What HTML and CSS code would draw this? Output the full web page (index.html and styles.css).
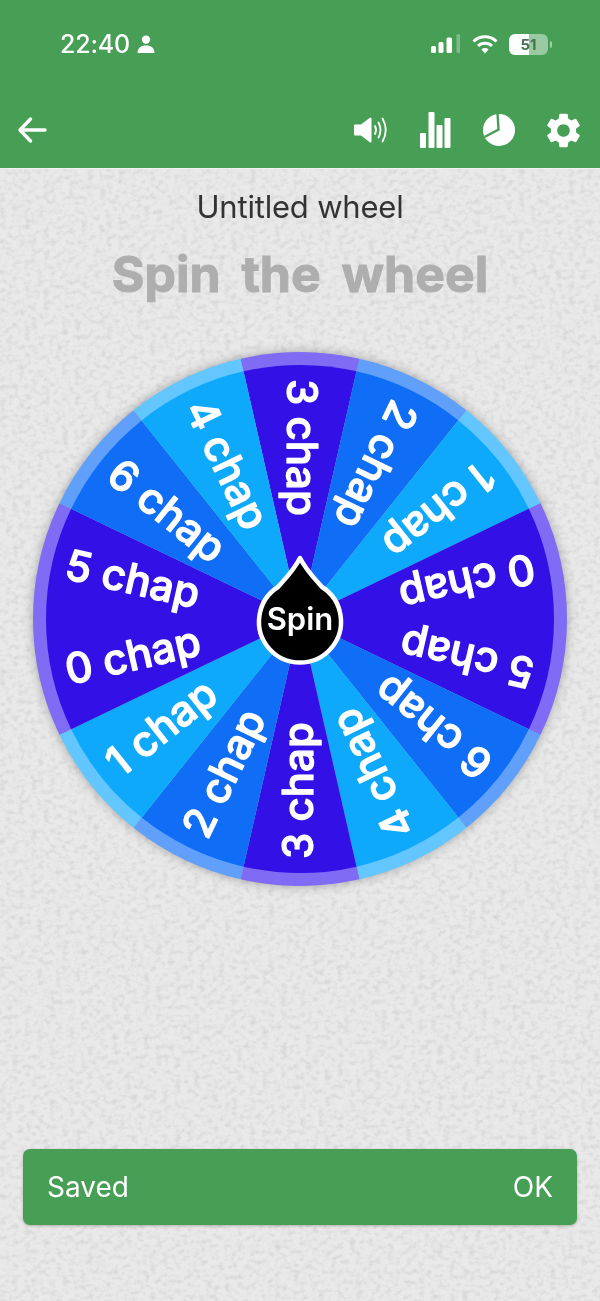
FILE: index.html
```html
<!DOCTYPE html>
<html lang="en">
  <head>
    <meta charset="utf-8" />
    <meta name="viewport" content="width=device-width, initial-scale=1.0" />
    <title>Spin the wheel</title>
    <link rel="stylesheet" href="styles.css">
  </head>
  <body>
    <!-- paper grain behind the page -->
    <svg class="texture" aria-hidden="true">
      <filter id="grain" color-interpolation-filters="sRGB">
        <feTurbulence type="fractalNoise" baseFrequency="0.16 0.2" numOctaves="3" seed="4"/>
        <feColorMatrix values="1.5 0 0 0 0.15  1.5 0 0 0 0.15  1.5 0 0 0 0.15  0 0 0 0 0.11"/>
      </filter>
      <rect width="100%" height="100%" filter="url(#grain)"/>
    </svg>

    <header class="appbar">
      <div class="status">
        <div class="status-left">
          <span class="time">22:40</span>
          <svg class="person" viewBox="0 0 18 18"><circle cx="9" cy="4.6" r="4.2"/><path d="M0.5 18c0-5 3.5-7.4 8.5-7.4s8.5 2.4 8.5 7.4z"/></svg>
        </div>
        <div class="status-right">
          <svg class="signal" viewBox="0 0 30 20">
            <rect x="0" y="12" width="5" height="7" rx="1.5"/>
            <rect x="7.5" y="8" width="5" height="11" rx="1.5"/>
            <rect x="15.5" y="3.5" width="5.5" height="15.5" rx="1.5"/>
            <rect class="faint" x="25.5" y="0" width="3.5" height="19" rx="1.5"/>
          </svg>
          <svg class="wifi" viewBox="0 0 26 20">
            <path d="M1.5 7.5a16.5 16.5 0 0 1 23 0" />
            <path d="M6 12a10 10 0 0 1 14 0" />
            <path class="dot" d="M13 19.5l-3.6-4a5.2 5.2 0 0 1 7.2 0z" />
          </svg>
          <div class="battery"><span>51</span></div>
          <div class="battery-cap"></div>
        </div>
      </div>
      <nav class="toolbar">
        <button class="icon-btn">
          <svg viewBox="0 0 40 40"><path class="line" d="M33 20H8.500M18.500 9L8 20l10.500 11"/></svg>
        </button>
        <div class="toolbar-right">
          <button class="icon-btn">
            <svg viewBox="0 0 40 40">
              <path d="M4 14.500h6L18.500 8q2-1.500 2 1v22q0 2.500-2 1L10 25.500H4q-1 0-1-1v-9q0-1 1-1z"/>
              <path class="line thin" d="M24 16q2 4 0 8M27.500 12.500q4 7.500 0 15M31.500 8.500q6.500 11.500 0 23"/>
            </svg>
          </button>
          <button class="icon-btn">
            <svg viewBox="0 0 40 40">
              <rect x="5" y="23" width="6" height="15" rx="1"/>
              <rect x="13.500" y="2" width="6" height="36" rx="1"/>
              <rect x="21.500" y="15" width="6" height="23" rx="1"/>
              <rect x="29.500" y="8" width="6" height="30" rx="1"/>
            </svg>
          </button>
          <button class="icon-btn">
            <svg viewBox="0 0 40 40">
              <circle cx="20" cy="20" r="16"/>
              <path class="cut" d="M18.500 3.500L19.500 19.500L5.500 27"/>
            </svg>
          </button>
          <button class="icon-btn">
            <svg class="gear" viewBox="2 2 20 20"><path d="M19.140 12.940c.04-.3.06-.61.06-.94 0-.32-.02-.64-.07-.94l2.030-1.580c.18-.14.23-.41.12-.61l-1.920-3.320c-.12-.22-.37-.29-.59-.22l-2.390.96c-.5-.38-1.030-.7-1.620-.94l-.36-2.540c-.04-.24-.24-.41-.48-.41h-3.840c-.24 0-.43.17-.47.41l-.36 2.540c-.59.24-1.130.57-1.620.94l-2.390-.96c-.22-.08-.47 0-.59.22L2.740 8.870c-.12.21-.08.47.12.61l2.030 1.580c-.05.3-.09.63-.09.94s.02.64.07.94l-2.030 1.580c-.18.14-.23.41-.12.61l1.920 3.320c.12.22.37.29.59.22l2.390-.96c.5.38 1.030.7 1.620.94l.36 2.540c.05.24.24.41.48.41h3.840c.24 0 .44-.17.47-.41l.36-2.540c.59-.24 1.130-.56 1.620-.94l2.390.96c.22.08.47 0 .59-.22l1.920-3.320c.12-.22.07-.47-.12-.61l-2.010-1.580zM12 15.600c-1.980 0-3.600-1.620-3.600-3.600s1.620-3.600 3.600-3.600 3.600 1.620 3.600 3.600-1.620 3.600-3.600 3.600z"/></svg>
          </button>
        </div>
      </nav>
    </header>

    <main class="content">
      <h2 class="wheel-name">Untitled wheel</h2>
      <h1 class="headline">Spin the wheel</h1>

      <svg class="wheel" viewBox="-280 -280 560 560">
        <defs>
          <path id="rim" d="M0 0L-59.410 -260.300A267 267 0 0 1 59.410 -260.300Z"/>
          <path id="wedge" d="M0 0L-56.520 -247.630A254 254 0 0 1 56.520 -247.630Z"/>
        </defs>
        <circle class="wheel-shadow" r="266"/>
        <g class="seg dark" transform="rotate(0)"><use class="rim" href="#rim"/><use class="fill" href="#wedge"/></g>
        <g class="seg blue" transform="rotate(25.714)"><use class="rim" href="#rim"/><use class="fill" href="#wedge"/></g>
        <g class="seg cyan" transform="rotate(51.429)"><use class="rim" href="#rim"/><use class="fill" href="#wedge"/></g>
        <g class="seg dark" transform="rotate(77.143)"><use class="rim" href="#rim"/><use class="fill" href="#wedge"/></g>
        <g class="seg dark" transform="rotate(102.857)"><use class="rim" href="#rim"/><use class="fill" href="#wedge"/></g>
        <g class="seg blue" transform="rotate(128.571)"><use class="rim" href="#rim"/><use class="fill" href="#wedge"/></g>
        <g class="seg cyan" transform="rotate(154.286)"><use class="rim" href="#rim"/><use class="fill" href="#wedge"/></g>
        <g class="seg dark" transform="rotate(180)"><use class="rim" href="#rim"/><use class="fill" href="#wedge"/></g>
        <g class="seg blue" transform="rotate(205.714)"><use class="rim" href="#rim"/><use class="fill" href="#wedge"/></g>
        <g class="seg cyan" transform="rotate(231.429)"><use class="rim" href="#rim"/><use class="fill" href="#wedge"/></g>
        <g class="seg dark" transform="rotate(257.143)"><use class="rim" href="#rim"/><use class="fill" href="#wedge"/></g>
        <g class="seg dark" transform="rotate(282.857)"><use class="rim" href="#rim"/><use class="fill" href="#wedge"/></g>
        <g class="seg blue" transform="rotate(308.571)"><use class="rim" href="#rim"/><use class="fill" href="#wedge"/></g>
        <g class="seg cyan" transform="rotate(334.286)"><use class="rim" href="#rim"/><use class="fill" href="#wedge"/></g>

        <!-- labels read from the rim in to the hub -->
        <g class="labels">
          <text transform="rotate(0) translate(-13 -240) rotate(90)">3 chap</text>
          <text transform="rotate(25.714) translate(-13 -240) rotate(90)">2 chap</text>
          <text transform="rotate(51.429) translate(-13 -240) rotate(90)">1 chap</text>
          <text transform="rotate(77.143) translate(-13 -240) rotate(90)">0 chap</text>
          <text transform="rotate(102.857) translate(-13 -240) rotate(90)">5 chap</text>
          <text transform="rotate(128.571) translate(-13 -240) rotate(90)">6 chap</text>
          <text transform="rotate(154.286) translate(-13 -240) rotate(90)">4 chap</text>
          <text transform="rotate(180) translate(-13 -240) rotate(90)">3 chap</text>
          <text transform="rotate(205.714) translate(-13 -240) rotate(90)">2 chap</text>
          <text transform="rotate(231.429) translate(-13 -240) rotate(90)">1 chap</text>
          <text transform="rotate(257.143) translate(-13 -240) rotate(90)">0 chap</text>
          <text transform="rotate(282.857) translate(-13 -240) rotate(90)">5 chap</text>
          <text transform="rotate(308.571) translate(-13 -240) rotate(90)">6 chap</text>
          <text transform="rotate(334.286) translate(-13 -240) rotate(90)">4 chap</text>
        </g>

        <path class="hub" d="M0 -62C-6 -50 -14 -42 -22 -33A41 41 0 1 0 22 -33C14 -42 6 -50 0 -62Z" transform="translate(0 1)"/>
        <text class="hub-label" y="11">Spin</text>
      </svg>

      <div class="toast">
        <span>Saved</span>
        <span>OK</span>
      </div>
    </main>
  </body>
</html>
```

FILE: styles.css
```css
html,
body {
  margin: 0;
  height: 100%;
}

body {
  width: 600px;
  height: 1301px;
  display: flex;
  flex-direction: column;
  overflow: hidden;
  background-color: #e7e7e7;
  font-family: Inter, "Liberation Sans", sans-serif;
}

.texture {
  position: fixed;
  top: 0;
  left: 0;
  width: 100%;
  height: 100%;
  z-index: -1;
}

.appbar {
  height: 168px;
  flex: none;
  background-color: #479e55;
  color: #fff;
  box-shadow: 0 1px 0 #f2f2f2;
}

.status {
  height: 88px;
  margin-bottom: 10px;
  display: flex;
  justify-content: space-between;
  align-items: center;
  padding: 0 48px 0 60px;
}

.status-left,
.status-right {
  display: flex;
  align-items: center;
}

.time {
  font-size: 25px;
  font-weight: 500;
  letter-spacing: -0.2px;
}

.person {
  width: 18px;
  height: 18px;
  margin-left: 7px;
  fill: #fff;
}

.signal {
  width: 30px;
  height: 20px;
  fill: #fff;
}

.signal .faint {
  opacity: 0.3;
}

.wifi {
  width: 26px;
  height: 20px;
  margin-left: 11px;
  fill: none;
  stroke: #fff;
  stroke-width: 3;
}

.wifi .dot {
  fill: #fff;
  stroke: none;
}

.battery {
  width: 39px;
  height: 21px;
  margin-left: 11px;
  border-radius: 6px;
  background: linear-gradient(90deg, #fff 51%, rgba(255, 255, 255, 0.45) 51%);
  display: flex;
  align-items: center;
  justify-content: center;
  color: #47734f;
  font-size: 15px;
  font-weight: 700;
}

.battery-cap {
  width: 2px;
  height: 7px;
  margin-left: 2px;
  border-radius: 0 2px 2px 0;
  background-color: rgba(255, 255, 255, 0.5);
}

.toolbar {
  height: 64px;
  display: flex;
  justify-content: space-between;
  padding-right: 5px;
}

.toolbar-right {
  display: flex;
}

.icon-btn {
  width: 64px;
  height: 64px;
  padding: 0;
  border: 0;
  background: none;
  display: flex;
  align-items: center;
  justify-content: center;
}

.icon-btn svg {
  width: 40px;
  height: 40px;
  fill: #fff;
}

.icon-btn .gear {
  width: 35px;
  height: 35px;
}

.icon-btn .line {
  fill: none;
  stroke: #fff;
  stroke-width: 3.4;
  stroke-linecap: round;
  stroke-linejoin: round;
}

.icon-btn .thin {
  stroke-width: 1.8;
}

.icon-btn .cut {
  fill: none;
  stroke: #479e55;
  stroke-width: 2.4;
}

.content {
  flex: 1;
  display: flex;
  flex-direction: column;
  align-items: center;
}

.wheel-name {
  margin: 20px 0 0;
  font-size: 31px;
  line-height: 38px;
  font-weight: 400;
  letter-spacing: -0.2px;
  color: #333;
}

.headline {
  margin: 16px 0 0;
  font-size: 50px;
  line-height: 64px;
  font-weight: 700;
  word-spacing: 9px;
  color: #aeaeae;
  -webkit-text-stroke: 1px #aeaeae;
}

.wheel {
  width: 560px;
  height: 560px;
  flex: none;
  margin-top: 33px;
}

.wheel-shadow {
  fill: #999;
  filter: drop-shadow(0 0 6px rgba(0, 0, 0, 0.35));
}

.dark .rim { fill: #7f6bf4; }
.dark .fill { fill: #3310e6; }
.blue .rim { fill: #60a0fa; }
.blue .fill { fill: #0f6ef5; }
.cyan .rim { fill: #63c6fe; }
.cyan .fill { fill: #0fa9fb; }

.labels text {
  font-size: 42px;
  font-weight: 500;
  fill: #fff;
  stroke: #fff;
  stroke-width: 1.2;
  stroke-linejoin: round;
}

.hub {
  fill: #000;
  stroke: #fff;
  stroke-width: 4.5;
  stroke-linejoin: round;
}

.hub-label {
  font-size: 31px;
  font-weight: 600;
  fill: #fff;
  text-anchor: middle;
}

.toast {
  width: 554px;
  height: 76px;
  margin-top: auto;
  margin-bottom: 76px;
  padding: 0 24px;
  box-sizing: border-box;
  border-radius: 7px;
  display: flex;
  align-items: center;
  justify-content: space-between;
  background-color: #479e55;
  box-shadow: 0 1px 3px rgba(0, 0, 0, 0.25);
  color: #fff;
  font-size: 28px;
}
```
